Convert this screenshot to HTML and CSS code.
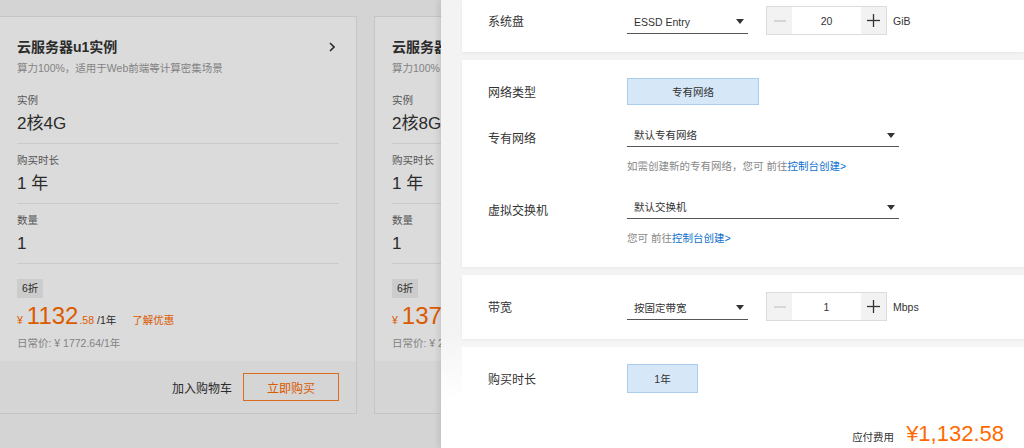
FILE: index.html
```html
<!DOCTYPE html>
<html lang="zh-CN">
<head>
    <meta charset="UTF-8">
    <title>云服务器购买</title>
    <link rel="stylesheet" href="styles.css">
</head>
<body>
<div class="page">
    <div class="cards">
        <div class="card">
            <div class="card-body">
                <div class="card-head">
                    <div class="card-title">
                        <span>云服务器u1实例</span>
                        <svg width="6" height="10" viewBox="0 0 6 10"><polyline points="1,1 5,5 1,9" fill="none" stroke="#333" stroke-width="1.6"/></svg>
                    </div>
                    <div class="card-desc">算力100%，适用于Web前端等计算密集场景</div>
                </div>
                <div class="field">
                    <div class="field-label">实例</div>
                    <div class="field-value">2核4G</div>
                </div>
                <div class="field">
                    <div class="field-label">购买时长</div>
                    <div class="field-value">1 年</div>
                </div>
                <div class="field">
                    <div class="field-label">数量</div>
                    <div class="field-value">1</div>
                </div>
                <div class="price-box">
                    <span class="badge">6折</span>
                    <div class="price-line">
                        <span class="yen">¥</span><span class="num">1132</span><span class="dec">.58</span><span class="per">/1年</span>
                        <a class="promo" href="javascript:;">了解优惠</a>
                    </div>
                    <div class="price-old">日常价: ¥ 1772.64/1年</div>
                </div>
            </div>
            <div class="card-foot">
                <a class="cart" href="javascript:;">加入购物车</a>
                <a class="buy" href="javascript:;">立即购买</a>
            </div>
        </div>
        <div class="card">
            <div class="card-body">
                <div class="card-head">
                    <div class="card-title">
                        <span>云服务器u1实例</span>
                        <svg width="6" height="10" viewBox="0 0 6 10"><polyline points="1,1 5,5 1,9" fill="none" stroke="#333" stroke-width="1.6"/></svg>
                    </div>
                    <div class="card-desc">算力100%，适用于Web前端等计算密集场景</div>
                </div>
                <div class="field">
                    <div class="field-label">实例</div>
                    <div class="field-value">2核8G</div>
                </div>
                <div class="field">
                    <div class="field-label">购买时长</div>
                    <div class="field-value">1 年</div>
                </div>
                <div class="field">
                    <div class="field-label">数量</div>
                    <div class="field-value">1</div>
                </div>
                <div class="price-box">
                    <span class="badge">6折</span>
                    <div class="price-line">
                        <span class="yen">¥</span><span class="num">1375</span><span class="dec">.49</span><span class="per">/1年</span>
                        <a class="promo" href="javascript:;">了解优惠</a>
                    </div>
                    <div class="price-old">日常价: ¥ 2292.48/1年</div>
                </div>
            </div>
            <div class="card-foot">
                <a class="cart" href="javascript:;">加入购物车</a>
                <a class="buy" href="javascript:;">立即购买</a>
            </div>
        </div>
    </div>

    <div class="mask"></div>

    <div class="drawer">
        <div class="drawer-body">
            <div class="section section-first">
                <div class="form-line">
                    <div class="form-label">系统盘</div>
                    <div class="select">
                        <span>ESSD Entry</span>
                        <svg width="8" height="5" viewBox="0 0 8 5"><polygon points="0,0 8,0 4,5" fill="#333"/></svg>
                    </div>
                    <div class="stepper">
                        <span class="step-btn"><svg width="12" height="12" viewBox="0 0 12 12"><line x1="0" y1="6" x2="12" y2="6" stroke="#c4c4c4" stroke-width="1.2"/></svg></span>
                        <span class="step-input">20</span>
                        <span class="step-btn"><svg width="13" height="13" viewBox="0 0 13 13"><line x1="0" y1="6.5" x2="13" y2="6.5" stroke="#333" stroke-width="1.3"/><line x1="6.5" y1="0" x2="6.5" y2="13" stroke="#333" stroke-width="1.3"/></svg></span>
                    </div>
                    <span class="unit">GiB</span>
                </div>
            </div>

            <div class="section section-net">
                <div class="form-line">
                    <div class="form-label">网络类型</div>
                    <div class="opt opt-wide">专有网络</div>
                </div>
                <div class="form-item item-vpc">
                    <div class="form-line form-line-end">
                        <div class="form-label">专有网络</div>
                        <div class="select select-wide">
                            <span>默认专有网络</span>
                            <svg width="8" height="5" viewBox="0 0 8 5"><polygon points="0,0 8,0 4,5" fill="#333"/></svg>
                        </div>
                    </div>
                    <div class="form-help">如需创建新的专有网络，您可 前往<a href="javascript:;">控制台创建&gt;</a></div>
                </div>
                <div class="form-item item-switch">
                    <div class="form-line form-line-end">
                        <div class="form-label">虚拟交换机</div>
                        <div class="select select-wide">
                            <span>默认交换机</span>
                            <svg width="8" height="5" viewBox="0 0 8 5"><polygon points="0,0 8,0 4,5" fill="#333"/></svg>
                        </div>
                    </div>
                    <div class="form-help">您可 前往<a href="javascript:;">控制台创建&gt;</a></div>
                </div>
            </div>

            <div class="section">
                <div class="form-line">
                    <div class="form-label">带宽</div>
                    <div class="select">
                        <span>按固定带宽</span>
                        <svg width="8" height="5" viewBox="0 0 8 5"><polygon points="0,0 8,0 4,5" fill="#333"/></svg>
                    </div>
                    <div class="stepper">
                        <span class="step-btn"><svg width="12" height="12" viewBox="0 0 12 12"><line x1="0" y1="6" x2="12" y2="6" stroke="#c4c4c4" stroke-width="1.2"/></svg></span>
                        <span class="step-input">1</span>
                        <span class="step-btn"><svg width="13" height="13" viewBox="0 0 13 13"><line x1="0" y1="6.5" x2="13" y2="6.5" stroke="#333" stroke-width="1.3"/><line x1="6.5" y1="0" x2="6.5" y2="13" stroke="#333" stroke-width="1.3"/></svg></span>
                    </div>
                    <span class="unit">Mbps</span>
                </div>
            </div>

            <div class="section section-last">
                <div class="form-line">
                    <div class="form-label">购买时长</div>
                    <div class="opt opt-small">1年</div>
                </div>
            </div>
        </div>
        <div class="drawer-foot">
            <span class="total-label">应付费用</span>
            <span class="total">¥1,132.58</span>
        </div>
    </div>
</div>
</body>
</html>
```

FILE: styles.css
```css
body {
    margin: 0;
    overflow: hidden;
    font-family: "Liberation Sans", "Noto Sans CJK SC", sans-serif;
}

a {
    text-decoration: none;
}

.page {
    position: relative;
    width: 1024px;
    height: 448px;
    overflow: hidden;
    background: #f7f7f7;
}

/* 左侧卡片 */
.cards {
    display: flex;
    gap: 17px;
    padding-top: 16px;
    margin-left: -1px;
}

.card {
    flex: none;
    width: 358px;
    box-sizing: border-box;
    background: #fff;
    border: 1px solid #e6e6e6;
}

.card-body {
    padding: 20px 17px 11px;
}

.card-head {
    margin-bottom: 9px;
}

.card-title {
    display: flex;
    justify-content: space-between;
    align-items: center;
    font-size: 14px;
    font-weight: bold;
    line-height: 20px;
    color: #333;
}

.card-title svg {
    margin-right: 4px;
}

.card-desc {
    margin-top: 4px;
    font-size: 10.5px;
    line-height: 14px;
    color: #999;
}

.field {
    padding: 9px 0 7px;
    border-bottom: 1px solid #ececec;
}

.field-label {
    font-size: 10.5px;
    line-height: 14px;
    color: #666;
}

.field-value {
    margin-top: 5px;
    font-size: 17px;
    line-height: 24px;
    color: #333;
}

.price-box {
    padding-top: 14px;
}

.badge {
    display: inline-block;
    height: 19px;
    line-height: 19px;
    padding: 0 5px;
    background: #eeeeee;
    font-size: 10.5px;
    color: #333;
}

.price-line {
    display: flex;
    align-items: baseline;
    margin-top: 4px;
    height: 28px;
    line-height: 28px;
    white-space: nowrap;
}

.yen {
    font-size: 10.5px;
    color: #ff6a00;
    margin-right: 4px;
}

.num {
    font-size: 24px;
    color: #ff6a00;
}

.dec {
    font-size: 10.5px;
    color: #ff6a00;
    margin-left: 1px;
}

.per {
    font-size: 10.5px;
    color: #333;
    margin-left: 3px;
}

.promo {
    font-size: 10.5px;
    color: #ff6a00;
    margin-left: 16px;
}

.price-old {
    margin-top: 6px;
    font-size: 10.5px;
    line-height: 14px;
    color: #999;
    white-space: nowrap;
}

.card-foot {
    display: flex;
    justify-content: flex-end;
    align-items: center;
    gap: 11px;
    height: 52px;
    padding-right: 17px;
    background: #f8f8f8;
}

.cart {
    font-size: 12px;
    color: #333;
}

.buy {
    display: flex;
    align-items: center;
    justify-content: center;
    width: 96px;
    height: 28px;
    box-sizing: border-box;
    border: 1px solid #ff7d26;
    font-size: 12px;
    color: #ff6a00;
}

/* 遮罩 */
.mask {
    position: absolute;
    top: 0;
    left: 0;
    right: 0;
    bottom: 0;
    background: rgba(0, 0, 0, 0.14);
}

/* 右侧抽屉 */
.drawer {
    position: absolute;
    top: 0;
    right: 0;
    bottom: 0;
    width: 583px;
    display: flex;
    flex-direction: column;
    background: #f3f3f3;
    box-shadow: -2px 0 6px rgba(0, 0, 0, 0.1);
}

.drawer-body {
    flex: 1;
    overflow: hidden;
    padding-left: 21px;
    background: linear-gradient(#f3f3f3 330px, #fff);
}

.section {
    margin-bottom: 8px;
    padding: 17px 0 18px 26px;
    background: #fff;
    box-shadow: 0 1px 3px rgba(0, 0, 0, 0.05);
}

.section-first {
    padding-top: 6px;
    padding-bottom: 17px;
}

.section-net {
    display: flex;
    flex-direction: column;
    padding-top: 18px;
    padding-bottom: 22px;
}

.section-last {
    box-shadow: none;
}

.item-vpc {
    margin-top: 16px;
}

.item-switch {
    margin-top: 20px;
}

.form-line {
    display: flex;
    align-items: center;
}

.form-line-end {
    align-items: flex-end;
}

.form-label {
    flex: none;
    width: 139px;
    padding-top: 3px;
    font-size: 12px;
    line-height: 16px;
    color: #333;
}

.form-help {
    margin: 12px 0 0 139px;
    font-size: 10.5px;
    line-height: 14px;
    color: #888;
}

.form-help a {
    color: #0b6fcf;
}

.select {
    display: flex;
    justify-content: space-between;
    align-items: center;
    width: 121px;
    height: 26px;
    box-sizing: border-box;
    padding: 3px 4px 0 7px;
    border-bottom: 1px solid #555;
    font-size: 10.5px;
    line-height: 18px;
    color: #333;
}

.select-wide {
    width: 272px;
}

.stepper {
    display: flex;
    height: 29px;
    margin-left: 18px;
    box-sizing: border-box;
    border: 1px solid #dcdcdc;
}

.step-btn {
    display: flex;
    align-items: center;
    justify-content: center;
    width: 25px;
    background: #f2f2f2;
}

.step-input {
    display: flex;
    align-items: center;
    justify-content: center;
    width: 69px;
    background: #fff;
    font-size: 10.5px;
    color: #333;
}

.unit {
    margin-left: 6px;
    font-size: 10.5px;
    color: #333;
}

.opt {
    display: flex;
    align-items: center;
    justify-content: center;
    box-sizing: border-box;
    border: 1px solid #aacdee;
    background: #d6e8f8;
    font-size: 10.5px;
    color: #333;
}

.opt-wide {
    width: 132px;
    height: 27px;
}

.opt-small {
    width: 71px;
    height: 29px;
}

.drawer-foot {
    flex: none;
    display: flex;
    justify-content: flex-end;
    align-items: baseline;
    height: 48px;
    box-sizing: border-box;
    padding: 20px 20px 0 0;
    background: #fff;
}

.total-label {
    margin-right: 12px;
    font-size: 10.5px;
    color: #333;
}

.total {
    font-size: 22px;
    line-height: 28px;
    color: #ff6a00;
}
```
